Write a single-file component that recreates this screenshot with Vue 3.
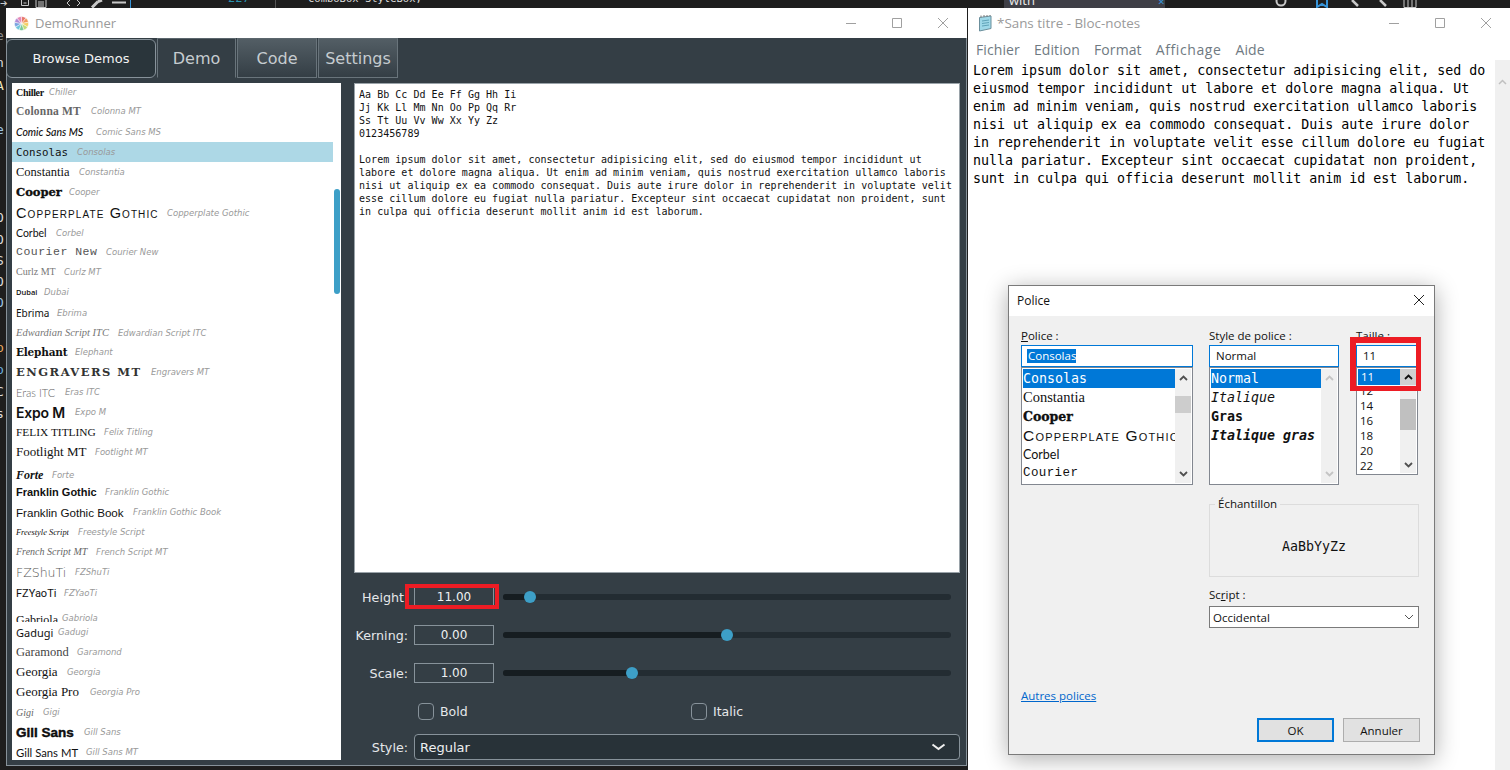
<script setup>
const fonts = [
  { name: 'Chiller', cls: 'f-chiller', w: 24, h: 18 },
  { name: 'Colonna MT', cls: 'f-colonna', w: 66, h: 20 },
  { name: 'Comic Sans MS', cls: 'f-comic', w: 71, h: 21 },
  { name: 'Consolas', cls: 'f-consolas', w: 52, h: 20, active: true },
  { name: 'Constantia', cls: 'f-constantia', w: 54, h: 20 },
  { name: 'Cooper', cls: 'f-cooper', w: 44, h: 20 },
  { name: 'Copperplate Gothic', cls: 'f-copper', w: 142, h: 21 },
  { name: 'Corbel', cls: 'f-corbel', w: 31, h: 19 },
  { name: 'Courier New', cls: 'f-courier', w: 81, h: 19 },
  { name: 'Curlz MT', cls: 'f-curlz', w: 39, h: 21 },
  { name: 'Dubai', cls: 'f-dubai', w: 19, h: 20 },
  { name: 'Ebrima', cls: 'f-ebrima', w: 32, h: 21 },
  { name: 'Edwardian Script ITC', cls: 'f-edwardian', w: 93, h: 19 },
  { name: 'Elephant', cls: 'f-elephant', w: 50, h: 20 },
  { name: 'Engravers MT', cls: 'f-engravers', w: 126, h: 20 },
  { name: 'Eras ITC', cls: 'f-eras', w: 40, h: 20 },
  { name: 'Expo M', cls: 'f-expo', w: 50, h: 20 },
  { name: 'Felix Titling', cls: 'f-felix', w: 79, h: 20 },
  { name: 'Footlight MT', cls: 'f-footlight', w: 70, h: 20 },
  { name: 'Forte', cls: 'f-forte', w: 27, h: 20 },
  { name: 'Franklin Gothic', cls: 'f-franklin', w: 80, h: 20 },
  { name: 'Franklin Gothic Book', cls: 'f-franklinb', w: 108, h: 20 },
  { name: 'Freestyle Script', cls: 'f-freestyle', w: 53, h: 20 },
  { name: 'French Script MT', cls: 'f-french', w: 71, h: 19 },
  { name: 'FZShuTi', cls: 'f-shuti', w: 50, h: 22 },
  { name: 'FZYaoTi', cls: 'f-yaoti', w: 39, h: 20 },
  { name: 'Gabriola', cls: 'f-gabriola', w: 37, h: 19 },
  { name: 'Gadugi', cls: 'f-gadugi', w: 33, h: 20 },
  { name: 'Garamond', cls: 'f-garamond', w: 52, h: 20 },
  { name: 'Georgia', cls: 'f-georgia', w: 42, h: 20 },
  { name: 'Georgia Pro', cls: 'f-georgia', w: 65, h: 20 },
  { name: 'Gigi', cls: 'f-gigi', w: 18, h: 20 },
  { name: 'Gill Sans', cls: 'f-gill', w: 59, h: 20 },
  { name: 'Gill Sans MT', cls: 'f-gillmt', w: 61, h: 20 }
]

const sample = `Aa Bb Cc Dd Ee Ff Gg Hh Ii
Jj Kk Ll Mm Nn Oo Pp Qq Rr
Ss Tt Uu Vv Ww Xx Yy Zz
0123456789

Lorem ipsum dolor sit amet, consectetur adipisicing elit, sed do eiusmod tempor incididunt ut
labore et dolore magna aliqua. Ut enim ad minim veniam, quis nostrud exercitation ullamco laboris
nisi ut aliquip ex ea commodo consequat. Duis aute irure dolor in reprehenderit in voluptate velit
esse cillum dolore eu fugiat nulla pariatur. Excepteur sint occaecat cupidatat non proident, sunt
in culpa qui officia deserunt mollit anim id est laborum.`

const notes = `Lorem ipsum dolor sit amet, consectetur adipisicing elit, sed do
eiusmod tempor incididunt ut labore et dolore magna aliqua. Ut
enim ad minim veniam, quis nostrud exercitation ullamco laboris
nisi ut aliquip ex ea commodo consequat. Duis aute irure dolor
in reprehenderit in voluptate velit esse cillum dolore eu fugiat
nulla pariatur. Excepteur sint occaecat cupidatat non proident,
sunt in culpa qui officia deserunt mollit anim id est laborum.`

const sliders = [
  { label: 'Height', value: '11.00', pos: 27, cls: 'no-colon' },
  { label: 'Kerning:', value: '0.00', pos: 224 },
  { label: 'Scale:', value: '1.00', pos: 129 }
]

const policeRows = [
  { t: 'Consolas', c: 'm', sel: true },
  { t: 'Constantia', c: 'sf' },
  { t: 'Cooper', c: 'cp' },
  { t: 'Copperplate Gothic', c: 'cg' },
  { t: 'Corbel', c: 'cb' },
  { t: 'Courier', c: 'cr' }
]
const styleRows = [
  { t: 'Normal', c: 'm', sel: true },
  { t: 'Italique', c: 'm it' },
  { t: 'Gras', c: 'm bd' },
  { t: 'Italique gras', c: 'm it bd' }
]
const sizes = ['12', '14', '16', '18', '20', '22']

// left edge of the code editor behind the windows
const behind = [
  { t: 'e', y: 20, c: '#8a8a8a' }, { t: 'n', y: 47, c: '#dcdcdc' }, { t: 'A', y: 70, c: '#f1e9c0' },
  { t: 'e', y: 114, c: '#9cc4e4' }, { t: 'O', y: 202, c: '#dcdcdc' }, { t: 'O', y: 224, c: '#dcdcdc' },
  { t: 'S', y: 245, c: '#dcdcdc' }, { t: 'O', y: 266, c: '#dcdcdc' }, { t: 'O', y: 287, c: '#9cc4e4' },
  { t: 'p', y: 332, c: '#e8a860' }, { t: 'p', y: 354, c: '#6cb0e0' }, { t: 'C', y: 376, c: '#dcdcdc' },
  { t: 's', y: 398, c: '#dcdcdc' }
]

// colour wheel of the app icon
const wheelColors = ['#e8786f', '#f09a5c', '#f5cf63', '#c3da74', '#78c89a', '#6fc5dc', '#7aa3e0', '#b08cd6', '#e58ab8']
const wedges = wheelColors.map((fill, i) => {
  const a = (i / 9) * Math.PI * 2 - Math.PI / 2
  const b = ((i + 1) / 9) * Math.PI * 2 - Math.PI / 2
  const p = (v, r) => (8 + Math.cos(v) * r).toFixed(2) + ' ' + (8 + Math.sin(v) * r).toFixed(2)
  return { fill, d: `M8 8 L${p(a, 7.5)} A7.5 7.5 0 0 1 ${p(b, 7.5)} Z` }
})
</script>

<template>
  <div class="desktop">
    <!-- editor toolbar still visible behind the windows -->
    <div class="vs-strip">
      <span class="vs-arrow">➔</span>
      <svg class="vs-icons" width="112" height="8" viewBox="0 0 112 8" fill="none" stroke="#c8c8c8">
        <path d="M1.5 0v5.5h7V0M3.5 3h3" />
        <path d="M16 0v7.5h10V0M18 2h6M18 4h6M18 6h6" />
        <path d="M50 0l-3 3 3 3M57 0l3 3-3 3" />
        <path d="M72 7.5l6-6M78 1.500l4-1.500" stroke-width="3" />
        <path d="M92 2.500h14" stroke-width="2" />
        <path d="M110.500 0v8" stroke="#3794d8" />
      </svg>
      <span class="vs-num">227</span>
      <span class="vs-sep"></span>
      <span class="vs-code">ComboBox StyleBox;</span>
      <span class="vs-find"><span class="vs-with">with</span><span class="vs-x">✕</span></span>
      <svg class="vs-tools" width="150" height="8" viewBox="0 0 150 8" fill="none" stroke="#c8c8c8">
        <circle cx="7" cy="1" r="4.500" stroke-width="2" />
        <path d="M43 0v7l5-3 5 3V0" stroke="#3794d8" stroke-width="2" />
        <path d="M78 0l6 6M106 0l6 6" stroke-width="2.500" />
        <path d="M130 0v7.500h12V0M134 0v7M138 0v7" />
      </svg>
    </div>
    <div class="vs-left">
      <span v-for="(b, i) in behind" :key="i" class="vs-letter" :style="{ top: b.y + 'px', color: b.c }">{{ b.t }}</span>
    </div>

    <!-- DemoRunner window -->
    <section class="win demo-win">
      <header class="titlebar">
        <svg class="app-icon" width="15" height="15" viewBox="0 0 16 16">
          <path v-for="w in wedges" :key="w.fill" :d="w.d" :fill="w.fill" stroke="#fff" stroke-width=".5" />
        </svg>
        <span class="title-text">DemoRunner</span>
        <div class="win-controls">
          <svg width="12" height="12" viewBox="0 0 12 12"><path d="M1 6.500h10" stroke="#a0a0a0" /></svg>
          <svg width="12" height="12" viewBox="0 0 12 12" fill="none"><path d="M1.500 1.500h9v9h-9z" stroke="#a0a0a0" /></svg>
          <svg width="12" height="12" viewBox="0 0 12 12"><path d="M1 1l10 10M11 1L1 11" stroke="#a0a0a0" /></svg>
        </div>
      </header>

      <nav class="tabs">
        <button class="browse">Browse Demos</button>
        <div class="tab tab-active">Demo</div>
        <div class="tab">Code</div>
        <div class="tab">Settings</div>
      </nav>

      <div class="demo-main">
        <div class="font-list">
          <div
            v-for="f in fonts"
            :key="f.name"
            class="font-row"
            :class="[{ active: f.active }, 'r-' + f.cls]"
            :style="{ height: f.h + 'px' }"
          >
            <span class="font-name" :class="f.cls" :style="{ width: f.w + 'px' }">{{ f.name }}</span>
            <span class="font-hint">{{ f.name }}</span>
          </div>
          <div class="list-scroll"></div>
        </div>

        <div class="demo-side">
          <div class="sample-box">{{ sample }}</div>

          <div v-for="s in sliders" :key="s.label" class="slider-row">
            <label class="ctl-label" :class="s.cls">{{ s.label }}</label>
            <div class="num-box">{{ s.value }}</div>
            <div class="track">
              <div class="track-fill" :style="{ width: s.pos + 'px' }"></div>
              <div class="thumb" :style="{ left: s.pos - 6 + 'px' }"></div>
            </div>
          </div>

          <div class="check-row">
            <div class="check"><span class="box"></span>Bold</div>
            <div class="check"><span class="box"></span>Italic</div>
          </div>

          <div class="style-row">
            <label class="ctl-label">Style:</label>
            <div class="combo">
              <span>Regular</span>
              <svg width="15" height="8" viewBox="0 0 15 8" fill="none"><path d="M1.500 1.500l6 4.500 6-4.500" stroke="#f0f0f0" stroke-width="2" /></svg>
            </div>
          </div>
        </div>
      </div>
    </section>

    <!-- Notepad window -->
    <section class="win note-win">
      <header class="titlebar note-title">
        <svg class="note-icon" width="16" height="17" viewBox="0 0 16 17">
          <path d="M2.500 2.500l11.500-1.500v12.500l-11.500 2.500z" fill="#9ed8e8" stroke="#6b8f9c" />
          <path d="M5 6l7-1M5 8.500l7-1M5 11l7-1" stroke="#5fa3b8" />
          <path d="M4 2.500v-2M7 2v-2M10 1.500v-1.500M13 1v-1" stroke="#777" />
        </svg>
        <span class="title-text note-title-text">*Sans titre - Bloc-notes</span>
        <div class="win-controls">
          <svg width="12" height="12" viewBox="0 0 12 12"><path d="M1 6.500h10" stroke="#a0a0a0" /></svg>
          <svg width="12" height="12" viewBox="0 0 12 12" fill="none"><path d="M1.500 1.500h9v9h-9z" stroke="#a0a0a0" /></svg>
          <svg width="12" height="12" viewBox="0 0 12 12"><path d="M1 1l10 10M11 1L1 11" stroke="#a0a0a0" /></svg>
        </div>
      </header>
      <div class="menu">
        <span>Fichier</span><span>Edition</span><span>Format</span><span>Affichage</span><span>Aide</span>
      </div>
      <div class="note-body">
        <div class="note-text">{{ notes }}</div>
        <div class="note-scroll">
          <svg width="9" height="6" viewBox="0 0 9 6" fill="none"><path d="M1 5l3.500-3.500L8 5" stroke="#c0c0c0" stroke-width="1.500" /></svg>
        </div>
      </div>
    </section>

    <!-- Police dialog -->
    <section class="win dialog">
      <header class="dlg-title">
        <span>Police</span>
        <svg width="12" height="12" viewBox="0 0 12 12"><path d="M1 1l10 10M11 1L1 11" stroke="#222" /></svg>
      </header>
      <div class="dlg-body">
        <div class="dlg-cols">
          <div class="dlg-col">
            <label class="dlg-label"><u>P</u>olice :</label>
            <div class="dlg-input"><span class="selected-text">Consolas</span></div>
            <div class="dlg-list list-police">
              <div class="dlg-rows">
                <div v-for="r in policeRows" :key="r.t" class="dlg-row" :class="[r.c, { sel: r.sel }]">{{ r.t }}</div>
              </div>
              <div class="dlg-scroll">
                <svg width="9" height="6" viewBox="0 0 9 6" fill="none"><path d="M1 5l3.500-3.500L8 5" stroke="#505050" stroke-width="1.800" /></svg>
                <div class="dlg-thumb police-thumb"></div>
                <svg width="9" height="6" viewBox="0 0 9 6" fill="none"><path d="M1 1l3.500 3.500L8 1" stroke="#505050" stroke-width="1.800" /></svg>
              </div>
            </div>
          </div>

          <div class="dlg-col">
            <label class="dlg-label">Style de police :</label>
            <div class="dlg-input"><span class="plain-text">Normal</span></div>
            <div class="dlg-list list-police">
              <div class="dlg-rows">
                <div v-for="r in styleRows" :key="r.t" class="dlg-row" :class="[r.c, { sel: r.sel }]">{{ r.t }}</div>
              </div>
              <div class="dlg-scroll">
                <svg width="9" height="6" viewBox="0 0 9 6" fill="none"><path d="M1 5l3.500-3.500L8 5" stroke="#c4c4c4" stroke-width="1.800" /></svg>
                <svg width="9" height="6" viewBox="0 0 9 6" fill="none"><path d="M1 1l3.500 3.500L8 1" stroke="#c4c4c4" stroke-width="1.800" /></svg>
              </div>
            </div>
          </div>

          <div class="dlg-col">
            <label class="dlg-label">Taille :</label>
            <div class="dlg-input"><span class="plain-text">11</span></div>
            <div class="dlg-list list-size">
              <div class="dlg-rows">
                <div class="size-sel">11</div>
                <div v-for="s in sizes" :key="s" class="size-row">{{ s }}</div>
              </div>
              <div class="dlg-scroll size-scroll">
                <div class="size-up">
                  <svg width="9" height="6" viewBox="0 0 9 6" fill="none"><path d="M1 5l3.500-3.500L8 5" stroke="#111" stroke-width="1.800" /></svg>
                </div>
                <div class="dlg-thumb size-thumb"></div>
                <svg class="size-down" width="9" height="6" viewBox="0 0 9 6" fill="none"><path d="M1 1l3.500 3.500L8 1" stroke="#505050" stroke-width="1.800" /></svg>
              </div>
            </div>
          </div>
        </div>

        <div class="dlg-lower">
          <div class="sample-group">
            <span class="legend">Échantillon</span>
            <span class="sample-text">AaBbYyZz</span>
          </div>
          <label class="dlg-label script-label">Sc<u>r</u>ipt :</label>
          <div class="script-select">
            <span>Occidental</span>
            <svg width="10" height="6" viewBox="0 0 10 6" fill="none"><path d="M1 1l4 4 4-4" stroke="#555" /></svg>
          </div>
        </div>

        <a class="more-fonts">Autres polices</a>

        <div class="dlg-buttons">
          <button class="dlg-btn primary">OK</button>
          <button class="dlg-btn">Annuler</button>
        </div>
      </div>
    </section>

    <!-- red annotation boxes drawn over the screenshot -->
    <div class="mark mark-height"></div>
    <div class="mark mark-size"></div>
  </div>
</template>

<style>
html, body {
  margin: 0;
  background: #1e1e1e;
}
</style>

<style scoped>
.desktop {
  position: relative;
  width: 1510px;
  height: 770px;
  overflow: hidden;
  background: #1e1e1e;
  font-family: "DejaVu Sans", sans-serif;
}

/* stuff behind the windows */
.vs-strip {
  display: flex;
  align-items: flex-start;
  height: 8px;
  overflow: hidden;
  color: #c8c8c8;
  font-size: 12px;
}
.vs-arrow { width: 20px; font-size: 9px; line-height: 6px; }
.vs-icons { flex: none; }
.vs-num {
  margin-left: 96px;
  margin-top: -10px;
  width: 47px;
  color: #2b91af;
  font-family: "DejaVu Sans Mono", monospace;
  line-height: 16px;
}
.vs-sep { width: 1px; height: 8px; background: #555; margin-right: 32px; }
.vs-code {
  width: 696px;
  margin-top: -10px;
  font-family: "DejaVu Sans Mono", monospace;
  font-size: 10.500px;
  line-height: 16px;
  color: #dcdcdc;
}
.vs-find {
  display: flex;
  justify-content: space-between;
  width: 156px;
  height: 8px;
  padding: 0 0 0 5px;
  background: #3f3f46;
}
.vs-with { margin-top: -8px; line-height: 16px; font-family: "Open Sans", sans-serif; font-size: 13px; color: #ececec; }
.vs-x { color: #3794d8; font-size: 9px; line-height: 4px; }
.vs-tools { flex: none; margin-left: 109px; }
.vs-left {
  position: absolute;
  left: 0;
  top: 8px;
  width: 6px;
  height: 762px;
  overflow: hidden;
}
.vs-letter {
  position: absolute;
  left: -4px;
  font-family: "DejaVu Sans Mono", monospace;
  font-size: 13px;
  line-height: 16px;
}

/* windows */
.win {
  position: absolute;
  box-sizing: border-box;
  display: flex;
  flex-direction: column;
}
.titlebar {
  display: flex;
  align-items: center;
  flex: none;
  height: 30px;
  background: #fff;
}
.title-text {
  font-family: "Open Sans", sans-serif;
  font-size: 13px;
  color: #9a9a9a;
}
.note-title-text { font-size: 13.400px; }
.win-controls {
  display: flex;
  gap: 34px;
  margin-left: auto;
  margin-right: 18px;
}

.demo-win {
  left: 6px;
  top: 8px;
  width: 961px;
  height: 758px;
  background: #343e45;
  border: solid #87929a;
  border-width: 0 1px 1px;
}
.demo-win .titlebar { padding-left: 8px; margin: 0 -1px; }
.app-icon { margin-right: 6px; }

.tabs {
  display: flex;
  flex: none;
  height: 40px;
  margin-left: -1px;
  color: #c6ccd0;
  font-size: 16px;
}
.browse {
  box-sizing: border-box;
  width: 150px;
  height: 39px;
  margin-top: 1px;
  padding: 0;
  border: 1px solid #87929a;
  border-radius: 6px;
  background: #2a353b;
  color: #f2f2f2;
  font-family: "DejaVu Sans", sans-serif;
  font-size: 13px;
}
.tab {
  box-sizing: border-box;
  display: flex;
  align-items: center;
  justify-content: center;
  width: 80px;
  margin-left: 1px;
  border: 1px solid #69747b;
  border-top-color: #5b666d;
  background: linear-gradient(#535e65, #343e45);
}
.tab-active {
  width: 79px;
  background: #343e45;
  border-bottom-color: transparent;
}

.demo-main {
  display: flex;
  flex: 1;
  min-height: 0;
  gap: 13px;
  padding: 5px 6px 5px 5px;
}

.font-list {
  position: relative;
  flex: none;
  width: 329px;
  background: #fff;
  overflow: hidden;
}
.font-row {
  box-sizing: border-box;
  display: flex;
  align-items: center;
  gap: 9px;
  width: 321px;
  padding-left: 4px;
  overflow: hidden;
  white-space: nowrap;
}
.font-row.active { background: #add8e6; }
.font-name {
  flex: none;
  color: #111;
  font-size: 12px;
  line-height: 14px;
}
.font-hint {
  color: #999;
  font-family: "DejaVu Sans", sans-serif;
  font-size: 8.500px;
  font-style: italic;
}
.list-scroll {
  position: absolute;
  left: 322px;
  top: 106px;
  width: 6px;
  height: 105px;
  border-radius: 3px;
  background: #3d9fc7;
}
.r-f-forte { padding-top: 6px; }
.r-f-gabriola { padding-top: 10px; align-items: flex-start; }

.f-chiller { font: bold 10px "Liberation Serif", serif; letter-spacing: -.3px; }
.f-colonna { font: bold 11.500px "Liberation Serif", serif; color: #666; letter-spacing: .2px; }
.f-comic { font: italic 500 10.500px "Lato", sans-serif; }
.f-consolas { font: 10.800px "DejaVu Sans Mono", monospace; }
.f-constantia { font: 12.500px "Liberation Serif", serif; }
.f-cooper { font: bold 11.500px "DejaVu Serif", serif; -webkit-text-stroke: .3px #000; }
.f-copper { font: small-caps 14.500px "Liberation Sans", sans-serif; letter-spacing: 1.100px; }
.f-corbel { font: 10.500px "Lato", sans-serif; }
.f-courier { font: 11.500px "Liberation Mono", monospace; color: #555; letter-spacing: .5px; }
.f-curlz { font: 10px "Liberation Serif", serif; color: #777; }
.f-dubai { font: 600 7.500px "Open Sans", sans-serif; }
.f-ebrima { font: 10px "Noto Sans", sans-serif; }
.f-edwardian { font: italic 10.500px "Liberation Serif", serif; color: #777; }
.f-elephant { font: bold 10.500px "DejaVu Serif", serif; letter-spacing: -.2px; }
.f-engravers { font: bold 11.500px "DejaVu Serif", serif; text-transform: uppercase; color: #333; letter-spacing: 1.500px; }
.f-eras { font: 300 11px "Lato", sans-serif; color: #666; }
.f-expo { font: 600 14px "Inter", sans-serif; letter-spacing: -.2px; }
.f-felix { font: 11.400px "Liberation Serif", serif; text-transform: uppercase; }
.f-footlight { font: 13px "Liberation Serif", serif; }
.f-forte { font: bold italic 12px "Liberation Serif", serif; }
.f-franklin { font: bold 11px "Liberation Sans", sans-serif; }
.f-franklinb { font: 11.600px "Liberation Sans", sans-serif; }
.f-freestyle { font: italic 8.400px "Liberation Serif", serif; }
.f-french { font: italic 10px "Liberation Serif", serif; color: #666; }
.f-shuti { font: 300 12.500px "DejaVu Sans", sans-serif; color: #555; }
.f-yaoti { font: 11px "Roboto", sans-serif; }
.f-gabriola { font: 12px "Liberation Serif", serif; }
.f-gadugi { font: 11px "Noto Sans", sans-serif; }
.f-garamond { font: 12.500px "Liberation Serif", serif; color: #444; }
.f-georgia { font: 13px "Liberation Serif", serif; }
.f-gigi { font: italic 10px "Liberation Serif", serif; color: #666; }
.f-gill { font: 900 13.500px "Liberation Sans", sans-serif; -webkit-text-stroke: .4px #000; }
.f-gillmt { font: 11.300px "Lato", sans-serif; }

.demo-side {
  display: flex;
  flex-direction: column;
  flex: 1;
  min-width: 0;
}
.sample-box {
  box-sizing: border-box;
  flex: none;
  height: 490px;
  margin-bottom: 14px;
  padding: 4px 4px 0;
  border: 1px solid #9aa3a9;
  background: #fff;
  color: #111;
  font-family: "DejaVu Sans Mono", monospace;
  font-size: 10px;
  letter-spacing: .03px;
  line-height: 13px;
  white-space: pre;
}
.slider-row {
  display: flex;
  align-items: center;
  flex: none;
  height: 20px;
  margin-bottom: 18px;
}
.ctl-label {
  flex: none;
  box-sizing: border-box;
  width: 54px;
  margin-right: 6px;
  padding-top: 1px;
  color: #e6e8ea;
  font-size: 12.700px;
  text-align: right;
  white-space: nowrap;
}
.ctl-label.no-colon { padding-right: 4px; }
.num-box {
  box-sizing: border-box;
  flex: none;
  width: 80px;
  height: 20px;
  border: 1px solid #87929a;
  color: #eef0f1;
  font-size: 12px;
  line-height: 19px;
  text-align: center;
}
.track {
  position: relative;
  flex: none;
  width: 448px;
  height: 6px;
  margin-left: 9px;
  border-radius: 3px;
  background: #232c32;
}
.track-fill {
  height: 6px;
  border-radius: 3px 0 0 3px;
  background: #161d21;
}
.thumb {
  position: absolute;
  top: -3px;
  width: 12px;
  height: 12px;
  border-radius: 50%;
  background: #3d9fc7;
}
.check-row {
  display: grid;
  grid-template-columns: 273px 1fr;
  flex: none;
  height: 17px;
  margin: 2px 0 14px 64px;
}
.check {
  display: flex;
  align-items: center;
  gap: 6px;
  color: #e6e8ea;
  font-size: 12.500px;
}
.box {
  box-sizing: border-box;
  width: 16px;
  height: 17px;
  border: 1px solid #87929a;
  border-radius: 4px;
}
.style-row {
  display: flex;
  align-items: center;
  flex: none;
  height: 26px;
}
.combo {
  box-sizing: border-box;
  display: flex;
  align-items: center;
  justify-content: space-between;
  flex: 1;
  height: 26px;
  padding: 0 13px 0 5px;
  border: 1px solid #87929a;
  border-radius: 4px;
  background: #283238;
  color: #eef0f1;
  font-size: 13px;
}

/* notepad */
.note-win {
  left: 968px;
  top: 8px;
  width: 542px;
  height: 762px;
  background: #fff;
}
.note-title { padding-left: 9px; }
.note-icon { margin-right: 4px; }
.menu {
  display: flex;
  flex: none;
  gap: 14px;
  height: 22px;
  padding-left: 8px;
  color: #6f7a82;
  font-family: "Open Sans", sans-serif;
  font-size: 14px;
  letter-spacing: .1px;
  line-height: 23px;
}
.menu span:nth-child(4) { letter-spacing: .6px; }
.note-body {
  display: flex;
  flex: 1;
  min-height: 0;
}
.note-text {
  flex: 1;
  padding: 2px 0 0 5px;
  color: #000;
  font-family: "DejaVu Sans Mono", monospace;
  font-size: 13.300px;
  line-height: 18px;
  white-space: pre;
}
.note-scroll {
  flex: none;
  width: 15px;
  padding-top: 10px;
  background: #f0f0f0;
  text-align: center;
}

/* dialog */
.dialog {
  left: 1008px;
  top: 285px;
  width: 427px;
  height: 470px;
  border: 1px solid #7a7a7a;
  background: #f0f0f0;
  box-shadow: 0 4px 22px rgba(0, 0, 0, .32);
  color: #111;
  font-family: "Open Sans", sans-serif;
  font-size: 11.500px;
}
.dlg-title {
  box-sizing: border-box;
  display: flex;
  align-items: center;
  justify-content: space-between;
  flex: none;
  height: 30px;
  padding: 0 9px 2px 8px;
  background: #fff;
  font-size: 12px;
}
.dlg-body {
  display: flex;
  flex-direction: column;
  flex: 1;
  padding: 12px 14px 0 12px;
}
.dlg-cols {
  display: grid;
  grid-template-columns: 172px 130px 63px;
  column-gap: 16px;
}
.dlg-cols .dlg-col:last-child { margin-left: 1px; }
.dlg-label {
  display: block;
  height: 17px;
  line-height: 15px;
}
.dlg-input {
  box-sizing: border-box;
  height: 22px;
  padding: 3px 0 0 5px;
  border: 1px solid #0078d7;
  background: #fff;
  line-height: 14px;
}
.selected-text {
  display: inline-block;
  padding-left: 1px;
  background: #0078d7;
  color: #fff;
}
.plain-text { padding-left: 1px; }
.dlg-list {
  box-sizing: border-box;
  display: flex;
  padding: 1px;
  border: 1px solid #828790;
  background: #fff;
}
.list-police { height: 118px; }
.list-size { height: 108px; }
.dlg-rows {
  flex: 1;
  min-width: 0;
  overflow: hidden;
}
.dlg-row {
  height: 19px;
  line-height: 19px;
  white-space: nowrap;
}
.dlg-row.sel { background: #0078d7; color: #fff; }
.m { font-family: "DejaVu Sans Mono", monospace; font-size: 13.300px; }
.it { font-style: italic; }
.bd { font-weight: bold; }
.sf { font-family: "Liberation Serif", serif; font-size: 14.500px; }
.cp { font: bold 12.500px/19px "DejaVu Serif", serif; -webkit-text-stroke: .3px #000; }
.cg { font-family: "Liberation Sans", sans-serif; font-size: 15.500px; font-variant: small-caps; letter-spacing: 1.200px; }
.cb { font-family: "Lato", sans-serif; font-size: 12.500px; }
.cr { font-family: "Liberation Mono", monospace; font-size: 12.500px; letter-spacing: .4px; }
.dlg-scroll {
  display: flex;
  flex-direction: column;
  align-items: center;
  justify-content: space-between;
  flex: none;
  width: 16px;
  padding: 6px 0;
  box-sizing: border-box;
  background: #f0f0f0;
  position: relative;
}
.dlg-thumb {
  position: absolute;
  left: 0;
  right: 0;
  background: #cdcdcd;
}
.police-thumb { top: 27px; height: 17px; }
.size-scroll { padding: 0 0 5px; }
.size-up {
  display: flex;
  align-items: center;
  justify-content: center;
  width: 100%;
  height: 16px;
  background: #d0d0d0;
}
.size-thumb { top: 30px; height: 31px; background: #c0c0c0; }
.size-sel {
  height: 16px;
  padding-left: 3px;
  background: #0078d7;
  color: #fff;
  line-height: 15px;
}
.size-row {
  height: 15px;
  padding-left: 2px;
  line-height: 15px;
}
.size-sel + .size-row { margin-top: -2px; }
.dlg-lower {
  display: flex;
  flex-direction: column;
  flex: none;
  width: 210px;
  margin: 19px 0 0 188px;
}
.sample-group {
  box-sizing: border-box;
  position: relative;
  display: flex;
  align-items: center;
  justify-content: center;
  height: 73px;
  border: 1px solid #dcdcdc;
}
.legend {
  position: absolute;
  left: 5px;
  top: -9px;
  padding: 0 3px;
  background: #f0f0f0;
}
.sample-text {
  padding-top: 11px;
  font-family: "DejaVu Sans Mono", monospace;
  font-size: 13.300px;
}
.script-label { margin-top: 10px; }
.script-select {
  box-sizing: border-box;
  display: flex;
  align-items: center;
  justify-content: space-between;
  height: 22px;
  margin-top: 2px;
  padding: 0 4px 0 3px;
  border: 1px solid #7a7a7a;
  background: #fff;
}
.more-fonts {
  margin-top: 60px;
  color: #0066cc;
  text-decoration: underline;
  line-height: 15px;
}
.dlg-buttons {
  display: flex;
  justify-content: flex-end;
  gap: 9px;
  margin-top: 15px;
}
.dlg-btn {
  box-sizing: border-box;
  width: 77px;
  height: 24px;
  padding: 0;
  border: 1px solid #adadad;
  background: #e1e1e1;
  color: #111;
  font-family: "Open Sans", sans-serif;
  font-size: 11.500px;
}
.dlg-btn.primary { border: 2px solid #0078d7; }

/* annotations */
.mark {
  position: absolute;
  box-sizing: border-box;
  border: 4px solid #ed1c24;
}
.mark-height {
  left: 405px;
  top: 584px;
  width: 94px;
  height: 25px;
}
.mark-size {
  left: 1350px;
  top: 337px;
  width: 71px;
  height: 54px;
  border-width: 6px 5px 5px 6px;
}
</style>
